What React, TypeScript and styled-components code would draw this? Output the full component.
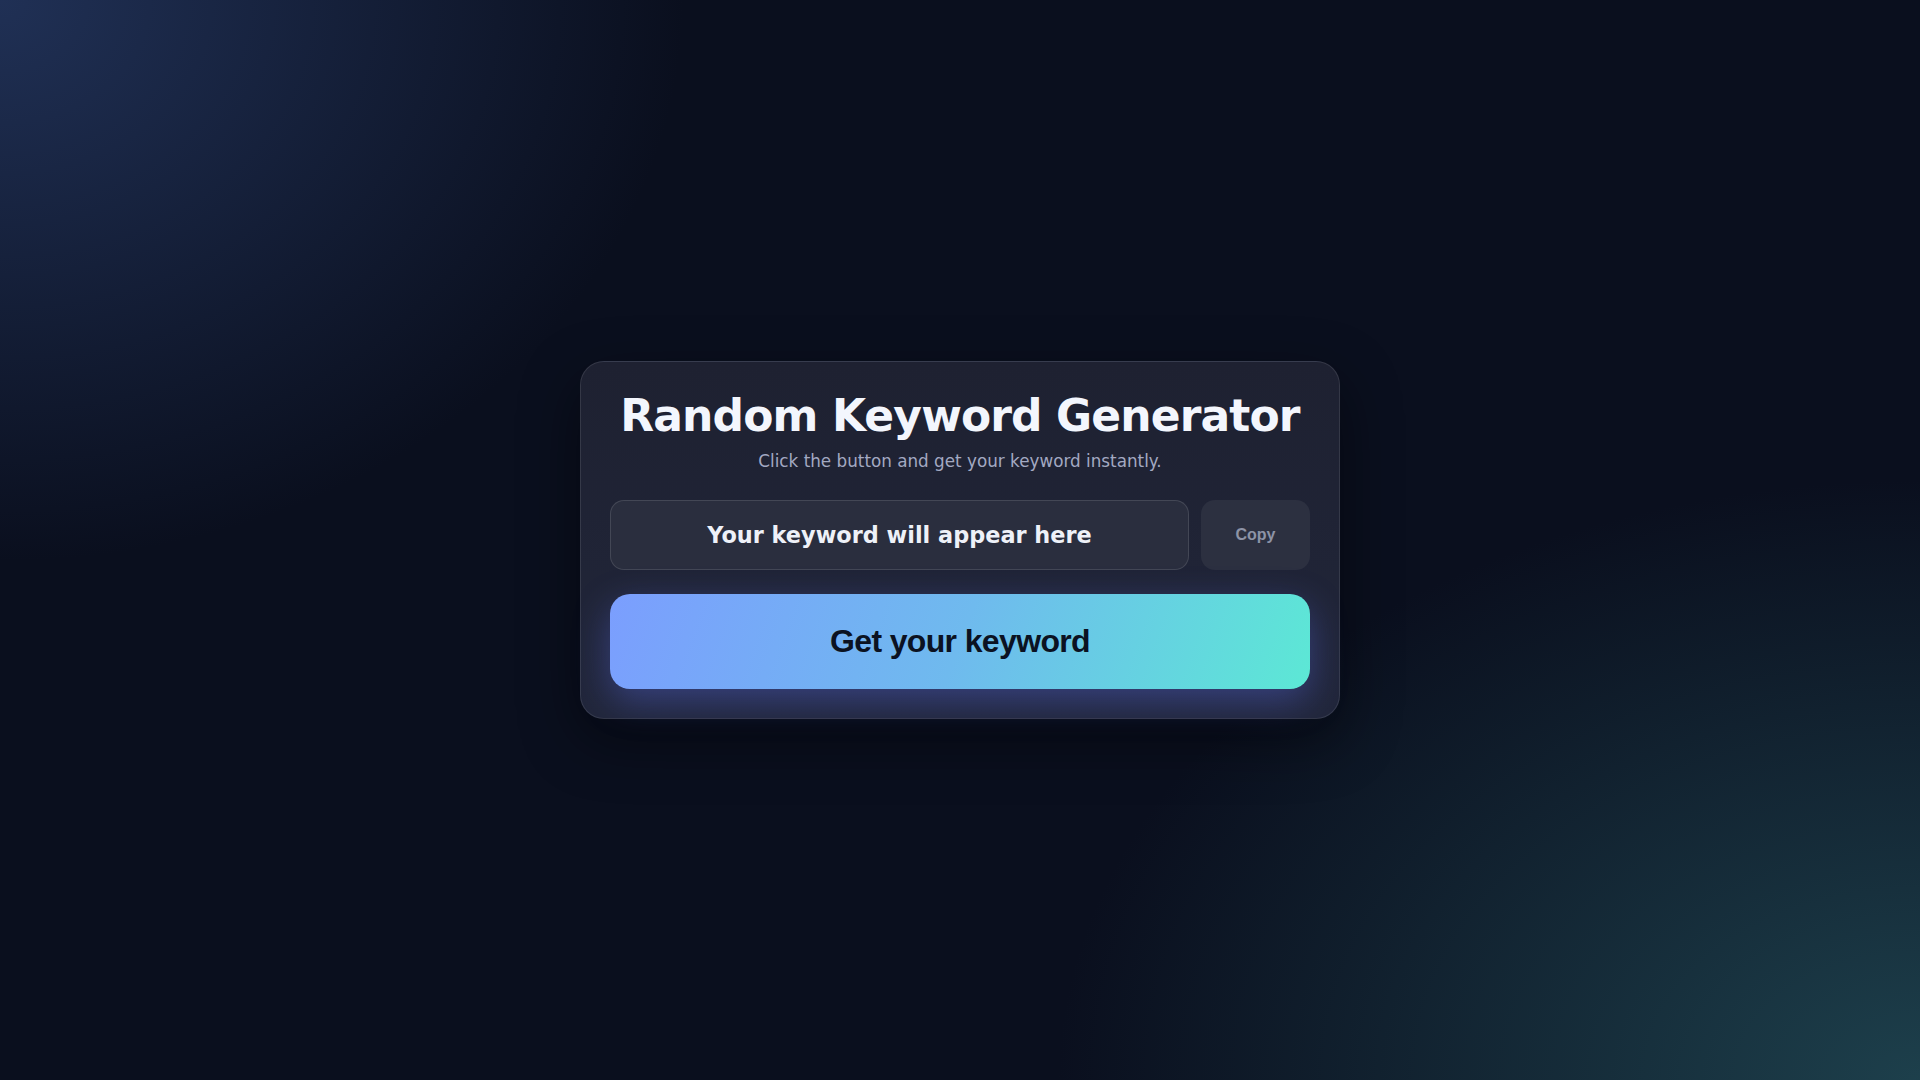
import styled, { createGlobalStyle } from "styled-components";
import { useState } from "react";

const KEYWORDS = [
  "Aurora",
  "Quantum",
  "Nebula",
  "Velocity",
  "Harmony",
  "Catalyst",
  "Horizon",
  "Momentum",
];

export default function App() {
  const [keyword, setKeyword] = useState<string | null>(null);

  const onGenerate = () => {
    const next = KEYWORDS[Math.floor(Math.random() * KEYWORDS.length)];
    setKeyword(next);
  };

  const onCopy = async () => {
    if (!keyword) return;
    try {
      await navigator.clipboard.writeText(keyword);
    } catch (e) {
      console.log(e);
    }
  };

  return (
    <>
      <GlobalStyle />
      <Page>
        <Card>
          <Title>Random Keyword Generator</Title>
          <Subtitle>Click the button and get your keyword instantly.</Subtitle>
          <OutputRow>
            <KeywordBox>{keyword ?? "Your keyword will appear here"}</KeywordBox>
            <CopyButton onClick={onCopy} disabled={!keyword}>
              Copy
            </CopyButton>
          </OutputRow>
          <GenerateButton onClick={onGenerate}>Get your keyword</GenerateButton>
        </Card>
      </Page>
    </>
  );
}

const GlobalStyle = createGlobalStyle`
  html, body {
    margin: 0;
    padding: 0;
    height: 100%;
  }
  body {
    font-family: "DejaVu Sans", sans-serif;
    background: #0a0f1e;
  }
  #root {
    height: 100%;
  }
`;

const Page = styled.div`
  min-height: 100vh;
  display: flex;
  align-items: center;
  justify-content: center;
  background:
    radial-gradient(ellipse 950px 780px at 0% 0%, rgba(33, 50, 88, 0.95), rgba(33, 50, 88, 0) 72%),
    radial-gradient(ellipse 1150px 800px at 100% 100%, rgba(30, 66, 78, 0.95), rgba(30, 66, 78, 0) 75%),
    #0a0f1e;
`;

const Card = styled.div`
  width: 760px;
  box-sizing: border-box;
  padding: 26px 29px 29px;
  display: flex;
  flex-direction: column;
  background: linear-gradient(180deg, #1e2131 0%, #21263a 100%);
  border: 1px solid rgba(255, 255, 255, 0.1);
  border-radius: 24px;
  box-shadow: 0 20px 60px rgba(0, 0, 0, 0.45);
`;

const Title = styled.h1`
  margin: 0;
  text-align: center;
  font-family: "DejaVu Sans", sans-serif;
  font-size: 44px;
  font-weight: 700;
  letter-spacing: -0.02em;
  line-height: 56px;
  color: #f3f6fd;
`;

const Subtitle = styled.p`
  margin: 5px 0 0;
  text-align: center;
  font-size: 16.8px;
  line-height: 24px;
  color: #a3a9c2;
`;

const OutputRow = styled.div`
  display: flex;
  gap: 12px;
  margin-top: 27px;
`;

const KeywordBox = styled.div`
  flex: 1;
  height: 70px;
  box-sizing: border-box;
  display: flex;
  align-items: center;
  justify-content: center;
  background: #2a2e3e;
  border: 1px solid rgba(255, 255, 255, 0.12);
  border-radius: 14px;
  font-size: 22.4px;
  font-weight: 700;
  color: #eef1f8;
`;

const CopyButton = styled.button`
  width: 109px;
  height: 70px;
  border: 0;
  border-radius: 14px;
  background: #2c3040;
  color: #8d93a6;
  font-family: "Liberation Sans", Arial, sans-serif;
  font-size: 16px;
  font-weight: 700;
  cursor: pointer;
  &:disabled {
    cursor: default;
  }
`;

const GenerateButton = styled.button`
  margin-top: 24px;
  height: 95px;
  border: 0;
  border-radius: 20px;
  background: linear-gradient(110deg, #7b9efe 0%, #6fbaee 50%, #5ce8d5 100%);
  box-shadow: 0 12px 36px rgba(98, 118, 255, 0.35);
  color: #0b1222;
  font-family: "Liberation Sans", Arial, sans-serif;
  font-size: 32px;
  font-weight: 700;
  letter-spacing: -0.02em;
  cursor: pointer;
`;
